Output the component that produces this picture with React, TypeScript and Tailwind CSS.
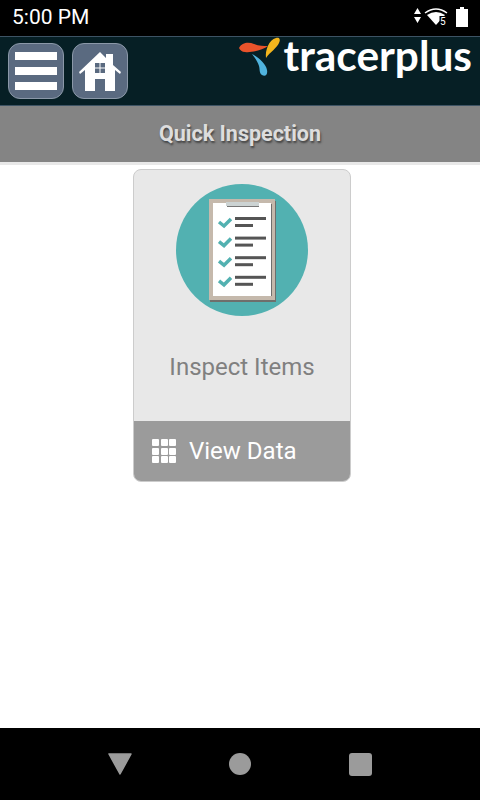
function StatusIcons() {
  return (
    <svg width="56" height="28" viewBox="0 0 56 28" className="shrink-0">
      <path d="M5.5 4 L9 10 H2 Z M2 13 H9 L5.5 19 Z" fill="#fff" />
      <path d="M13 9 Q24 1 35 9" fill="none" stroke="#fff" strokeWidth="1.5" />
      <path d="M15 11 Q24 5 33 11 L24 21 Z" fill="#fff" />
      <rect x="27.5" y="12" width="8" height="10" fill="#000" />
      <text x="28" y="21" fontSize="10" fill="#fff" fontFamily="Roboto, sans-serif">5</text>
      <path d="M48 3 H52 V5 H56 V23 H44 V5 H48 Z" fill="#fff" />
    </svg>
  );
}

function HomeIcon() {
  return (
    <svg width="44" height="42" viewBox="0 0 44 42">
      <path d="M1 22 L22 2 L28 8 V4 H35 V15 L43 22 L42 24 L37 20 V41 H27 V29 H17 V41 H7 V20 L2 24 Z" fill="#fff" />
      <path d="M17 13 H21.5 V17.5 H17 Z M22.5 13 H27 V17.5 H22.5 Z M17 18.5 H21.5 V23 H17 Z M22.5 18.5 H27 V23 H22.5 Z" fill="#5a6a80" />
    </svg>
  );
}

function Logo() {
  return (
    <svg width="42" height="40" viewBox="0 0 42 40" className="shrink-0">
      <path d="M0 11 C3 5 10 5 15 7 C20 9 25 9 29 9 C24 13 12 16 6 15 C3 15 1 13 0 11 Z" fill="#e9532b" />
      <path d="M27 21 C26 13 30 3 37 1 C40 0 42 2 40 6 C38 11 31 15 27 21 Z" fill="#f2b51d" />
      <path d="M13 17 C19 20 27 27 28 33 C29 38 26 40 23 38 C20 36 21 32 20 29 C19 25 16 21 13 17 Z" fill="#4fb3de" />
    </svg>
  );
}

function Checklist() {
  const rows = [0, 1, 2, 3];
  return (
    <svg width="132" height="132" viewBox="0 0 132 132">
      <circle cx="66" cy="66" r="66" fill="#52b1b1" />
      <rect x="34" y="17" width="66" height="101" fill="#6f6f6c" />
      <rect x="33" y="15" width="66" height="101" fill="#c5b9ac" />
      <rect x="37" y="19" width="58" height="93" fill="#fff" />
      <rect x="95" y="20" width="1" height="92" fill="#6f6f6c" />
      <rect x="50" y="18" width="33" height="4" fill="#ccd3d3" />
      <rect x="51" y="22" width="32" height="1" fill="#777" />
      {rows.map((i) => (
        <g key={i} transform={`translate(0 ${i * 19.6})`}>
          <path d="M43 38 L48 42 L55 35" fill="none" stroke="#52b1b1" strokeWidth="3.5" />
          <rect x="59" y="33" width="31" height="3" fill="#555" />
          <rect x="59" y="40" width="18" height="3" fill="#555" />
        </g>
      ))}
    </svg>
  );
}

export default function App() {
  return (
    <div className="flex h-[800px] w-[480px] flex-col overflow-hidden bg-white font-['Roboto',sans-serif]">
      <div className="flex h-9 shrink-0 items-center justify-between bg-black pl-3 pr-3 text-white">
        <span className="text-[21px]">5:00 PM</span>
        <StatusIcons />
      </div>

      <div className="flex h-[70px] shrink-0 items-start justify-between border-y border-[#3d5364] bg-[#061f25]">
        <div className="flex gap-2 pl-2 pt-[6px]">
          <button className="flex h-14 w-14 flex-col items-center justify-center gap-[7px] rounded-xl border border-[#8b98a8] bg-[#5a6a80]">
            <span className="h-2 w-[42px] bg-white" />
            <span className="h-2 w-[42px] bg-white" />
            <span className="h-2 w-[42px] bg-white" />
          </button>
          <button className="flex h-14 w-14 items-center justify-center rounded-xl border border-[#8b98a8] bg-[#5a6a80]">
            <HomeIcon />
          </button>
        </div>
        <div className="flex items-start">
          <Logo />
          <span className="ml-[3px] mr-2 font-['Lato',sans-serif] text-[42.4px] leading-[36px] font-bold text-white">
            tracerplus
          </span>
        </div>
      </div>

      <div className="flex h-[56px] shrink-0 items-center justify-center bg-[#848484] text-[21.5px] font-bold text-[#dddddd] [text-shadow:1px_2px_2px_#444]">
        Quick Inspection
      </div>
      <div className="h-[3px] shrink-0 bg-[#e8e8e8]" />

      <div className="flex flex-1 justify-center pl-1 pt-1">
        <div className="flex h-[313px] w-[218px] flex-col overflow-hidden rounded-lg border border-[#cccccc] bg-[#e8e8e8]">
          <div className="flex flex-1 flex-col items-center pt-[14px]">
            <Checklist />
            <span className="mt-[35px] text-2xl text-[#808080]">Inspect Items</span>
          </div>
          <div className="flex h-[60px] items-center gap-[13px] bg-[#9b9b9b] pl-[18px] text-2xl text-white">
            <div className="grid h-6 w-6 grid-cols-3 gap-[1.5px]">
              {[0, 1, 2, 3, 4, 5, 6, 7, 8].map((i) => (
                <span key={i} className="rounded-[1px] bg-white" />
              ))}
            </div>
            View Data
          </div>
        </div>
      </div>

      <div className="grid h-[72px] shrink-0 grid-cols-[120px_120px_120px] items-center justify-center justify-items-center bg-black">
        <svg width="24" height="22" viewBox="0 0 24 22">
          <path d="M1 1 H23 L12 21 Z" fill="#9b9b9b" stroke="#9b9b9b" strokeWidth="1.5" strokeLinejoin="round" />
        </svg>
        <span className="h-[22px] w-[22px] rounded-full bg-[#9b9b9b]" />
        <span className="h-[23px] w-[23px] rounded-[3px] bg-[#9b9b9b]" />
      </div>
    </div>
  );
}
